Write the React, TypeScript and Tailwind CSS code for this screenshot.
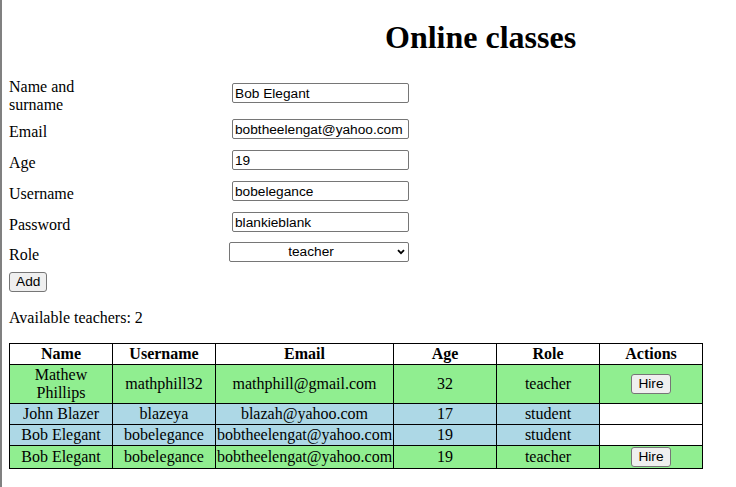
import { ChangeEvent, useState } from "react"

type Person = {
  name: string
  username: string
  email: string
  age: number
  role: "teacher" | "student"
}

const people: Person[] = [
  { name: "Mathew Phillips", username: "mathphill32", email: "mathphill@gmail.com", age: 32, role: "teacher" },
  { name: "John Blazer", username: "blazeya", email: "blazah@yahoo.com", age: 17, role: "student" },
  { name: "Bob Elegant", username: "bobelegance", email: "bobtheelengat@yahoo.com", age: 19, role: "student" },
  { name: "Bob Elegant", username: "bobelegance", email: "bobtheelengat@yahoo.com", age: 19, role: "teacher" },
]

const inputCls =
  "ml-[123px] w-[177px] h-[20px] px-[2px] pt-[1px] border border-[#767676] rounded-[2px] bg-white text-[13.7px] leading-[16px] text-black [font-family:'Liberation_Sans',Arial,sans-serif] outline-none"

const btnCls =
  "h-[20px] px-[6px] border border-[#767676] rounded-[3px] bg-[#efefef] text-[13.7px] leading-[16px] text-black [font-family:'Liberation_Sans',Arial,sans-serif]"

export default function App() {
  const [form, setForm] = useState({
    name: "Bob Elegant",
    email: "bobtheelengat@yahoo.com",
    age: "19",
    username: "bobelegance",
    password: "blankieblank",
    role: "teacher",
  })

  const set = (key: keyof typeof form) => (e: ChangeEvent<HTMLInputElement | HTMLSelectElement>) =>
    setForm({ ...form, [key]: e.target.value })

  const teachers = people.filter((p) => p.role === "teacher").length

  return (
    <div className="min-h-screen bg-white border-l-2 border-[#808080] pl-[7px] pt-[19px] text-black text-[16px] leading-[18px] [font-family:'Liberation_Serif','Times_New_Roman',serif]">
      <h1 className="ml-[376px] text-[32px] leading-[36px] font-bold">Online classes</h1>

      {/* Form */}
      <div className="mt-[23px] flex flex-col">
        <div className="flex items-start">
          <label className="w-[100px]">Name and surname</label>
          <input className={inputCls + " mt-[5px]"} value={form.name} onChange={set("name")} />
        </div>
        <div className="flex items-start mt-[5px]">
          <label className="w-[100px] mt-[4px]">Email</label>
          <input className={inputCls} value={form.email} onChange={set("email")} />
        </div>
        <div className="flex items-start mt-[9px]">
          <label className="w-[100px] mt-[4px]">Age</label>
          <input className={inputCls} value={form.age} onChange={set("age")} />
        </div>
        <div className="flex items-start mt-[9px]">
          <label className="w-[100px] mt-[4px]">Username</label>
          <input className={inputCls} value={form.username} onChange={set("username")} />
        </div>
        <div className="flex items-start mt-[9px]">
          <label className="w-[100px] mt-[4px]">Password</label>
          <input className={inputCls} value={form.password} onChange={set("password")} />
        </div>
        <div className="flex items-start mt-[8px]">
          <label className="w-[100px] mt-[4px]">Role</label>
          <div className="relative ml-[120px]">
            <select
              className="appearance-none w-[180px] h-[20px] pr-[16px] border border-[#767676] rounded-[2px] bg-white text-center [text-align-last:center] text-[13.7px] leading-[16px] text-black [font-family:'Liberation_Sans',Arial,sans-serif] outline-none"
              value={form.role}
              onChange={set("role")}
            >
              <option value="teacher">teacher</option>
              <option value="student">student</option>
            </select>
            <svg className="absolute right-[4px] top-[7px] pointer-events-none" width="8" height="6" viewBox="0 0 8 6">
              <path d="M1 1.2 L4 4.2 L7 1.2" fill="none" stroke="#000" strokeWidth="1.8" />
            </svg>
          </div>
        </div>
        <div className="mt-[8px]">
          <button className={btnCls}>Add</button>
        </div>
      </div>

      <p className="mt-[17px]">Available teachers: {teachers}</p>

      {/* Table */}
      <table className="mt-[16px] border-collapse table-fixed w-[693px] text-center">
        <colgroup>
          <col className="w-[103px]" />
          <col className="w-[103px]" />
          <col className="w-[178px]" />
          <col className="w-[103px]" />
          <col className="w-[103px]" />
          <col className="w-[103px]" />
        </colgroup>
        <thead>
          <tr className="bg-white">
            <th className="border border-black p-[1px] font-bold">Name</th>
            <th className="border border-black p-[1px] font-bold">Username</th>
            <th className="border border-black p-[1px] font-bold">Email</th>
            <th className="border border-black p-[1px] font-bold">Age</th>
            <th className="border border-black p-[1px] font-bold">Role</th>
            <th className="border border-black p-[1px] font-bold">Actions</th>
          </tr>
        </thead>
        <tbody>
          {people.map((p, i) => {
            const bg = p.role === "teacher" ? "bg-[#90ee90]" : "bg-[#add8e6]"
            return (
              <tr key={i}>
                <td className={"border border-black p-[1px] " + bg}>{p.name}</td>
                <td className={"border border-black p-[1px] " + bg}>{p.username}</td>
                <td className={"border border-black p-[1px] whitespace-nowrap " + bg}>{p.email}</td>
                <td className={"border border-black p-[1px] " + bg}>{p.age}</td>
                <td className={"border border-black p-[1px] " + bg}>{p.role}</td>
                <td className={"border border-black p-[1px] " + (p.role === "teacher" ? bg : "bg-white")}>
                  {p.role === "teacher" && <button className={btnCls + " align-middle"}>Hire</button>}
                </td>
              </tr>
            )
          })}
        </tbody>
      </table>
    </div>
  )
}
